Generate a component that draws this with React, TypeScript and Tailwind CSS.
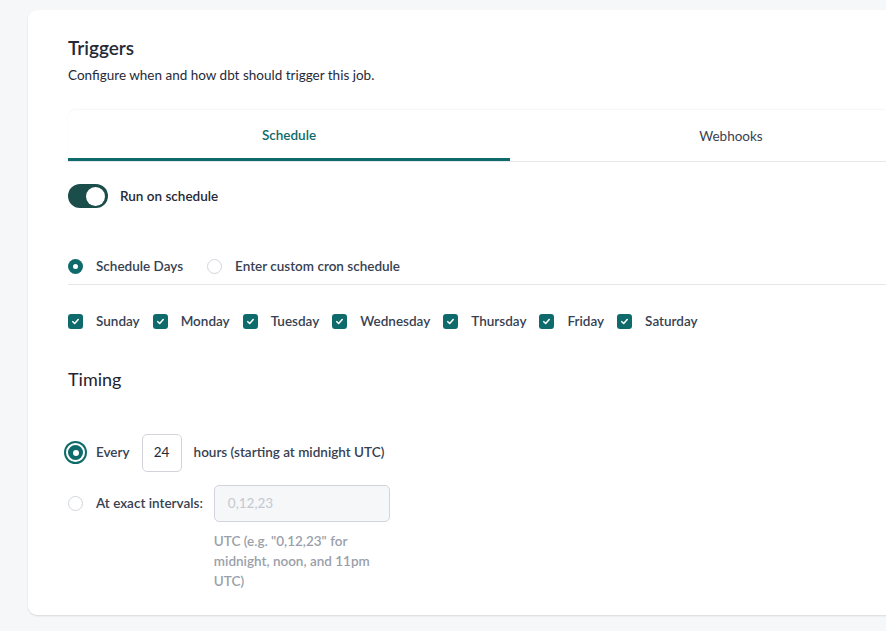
import React from "react";

const days = ["Sunday", "Monday", "Tuesday", "Wednesday", "Thursday", "Friday", "Saturday"];

const Check: React.FC = () => (
  <span className="flex h-[15px] w-[15px] shrink-0 items-center justify-center rounded-[3px] bg-[#0f6b6b]">
    <svg width="9" height="9" viewBox="0 0 10 10" fill="none">
      <path d="M2 5.2 4.1 7.2 8 2.9" stroke="white" strokeWidth="1.7" strokeLinecap="round" strokeLinejoin="round" />
    </svg>
  </span>
);

const Radio: React.FC<{ checked?: boolean }> = ({ checked }) =>
  checked ? (
    <span className="flex h-[15px] w-[15px] shrink-0 items-center justify-center rounded-full bg-[#0f6b6b]">
      <span className="h-[5px] w-[5px] rounded-full bg-white" />
    </span>
  ) : (
    <span className="block h-[15px] w-[15px] shrink-0 rounded-full border border-[#d1d5db] bg-white" />
  );

export default function App() {
  return (
    <div
      className="min-h-[631px] w-[886px] overflow-hidden bg-[#f6f7f9] pt-[10px] pl-[28px] text-[#262a38]"
      style={{ fontFamily: '"Source Sans Pro", Lato, "Noto Sans", sans-serif' }}
    >
      <div className="w-[964px] rounded-[9px] bg-white px-[40px] pt-[25px] pb-[24px] shadow-[0_1px_2px_rgba(0,0,0,0.12)]">
        {/* Header */}
        <h2 className="text-[19px] font-semibold leading-[26px] text-[#262a38]">Triggers</h2>
        <p className="mt-[5px] text-[13.5px] leading-[18px] text-[#262a38]">
          Configure when and how dbt should trigger this job.
        </p>

        {/* Tabs */}
        <div className="mt-[26px] flex rounded-t-[8px] border-b border-[#e5e7eb] shadow-[0_-1px_2px_rgba(0,0,0,0.04)]">
          <div className="flex h-[51px] flex-1 items-center justify-center border-b-[3px] border-[#0f6b6b] pt-[3px] text-[13.5px] font-semibold text-[#0f6b6b]">
            Schedule
          </div>
          <div className="flex h-[51px] flex-1 items-center justify-center pt-[2px] text-[13.5px] text-[#374151]">
            Webhooks
          </div>
        </div>

        {/* Run on schedule */}
        <div className="mt-[22px] flex items-center gap-[12px]">
          <span className="flex h-[24px] w-[40px] items-center justify-end rounded-full bg-[#1b4d4a] px-[3px]">
            <span className="h-[19px] w-[19px] rounded-full bg-white" />
          </span>
          <span className="text-[13.5px] font-semibold text-[#262a38]">Run on schedule</span>
        </div>

        {/* Schedule type */}
        <div className="mt-[48px] flex items-center border-b border-[#e5e7eb] pb-[8px] text-[13.5px] font-semibold text-[#374151]">
          <Radio checked />
          <span className="ml-[13px]">Schedule Days</span>
          <span className="ml-[24px]">
            <Radio />
          </span>
          <span className="ml-[13px]">Enter custom cron schedule</span>
        </div>

        {/* Days */}
        <div className="mt-[26px] flex items-center text-[13.5px] font-semibold text-[#374151]">
          {days.map((d) => (
            <div key={d} className="mr-[13px] flex items-center gap-[13px]">
              <Check />
              <span>{d}</span>
            </div>
          ))}
        </div>

        {/* Timing */}
        <h3 className="mt-[35px] text-[18px] leading-[24px] text-[#1f2330]">Timing</h3>

        <div className="mt-[43px] flex items-center text-[13.5px] font-semibold text-[#374151]">
          <span className="-ml-[4px] flex h-[23px] w-[23px] items-center justify-center rounded-full bg-[#0f6b6b]">
            <span className="flex h-[19px] w-[19px] items-center justify-center rounded-full border-2 border-white bg-[#0f6b6b]">
              <span className="h-[6px] w-[6px] rounded-full bg-white" />
            </span>
          </span>
          <span className="ml-[9px]">Every</span>
          <span className="ml-[12px] flex h-[38px] w-[40px] items-center justify-center rounded-[5px] border border-[#d1d5db] text-[13.5px] font-normal text-[#262a38]">
            24
          </span>
          <span className="ml-[12px]">hours (starting at midnight UTC)</span>
        </div>

        <div className="mt-[13px] flex items-start text-[13.5px] font-semibold text-[#374151]">
          <div className="flex h-[37px] items-center">
            <Radio />
            <span className="ml-[13px]">At exact intervals:</span>
          </div>
          <div className="ml-[11px] flex flex-col">
            <div className="flex h-[37px] w-[176px] items-center rounded-[5px] border border-[#d1d5db] bg-[#f6f7f9] px-[13px] text-[13.5px] font-normal text-[#c4c8cf]">
              0,12,23
            </div>
            <p className="mt-[9px] w-[172px] text-[13.5px] leading-[20px] font-semibold text-[#9aa0aa]">
              UTC (e.g. "0,12,23" for midnight, noon, and 11pm UTC)
            </p>
          </div>
        </div>
      </div>
    </div>
  );
}
